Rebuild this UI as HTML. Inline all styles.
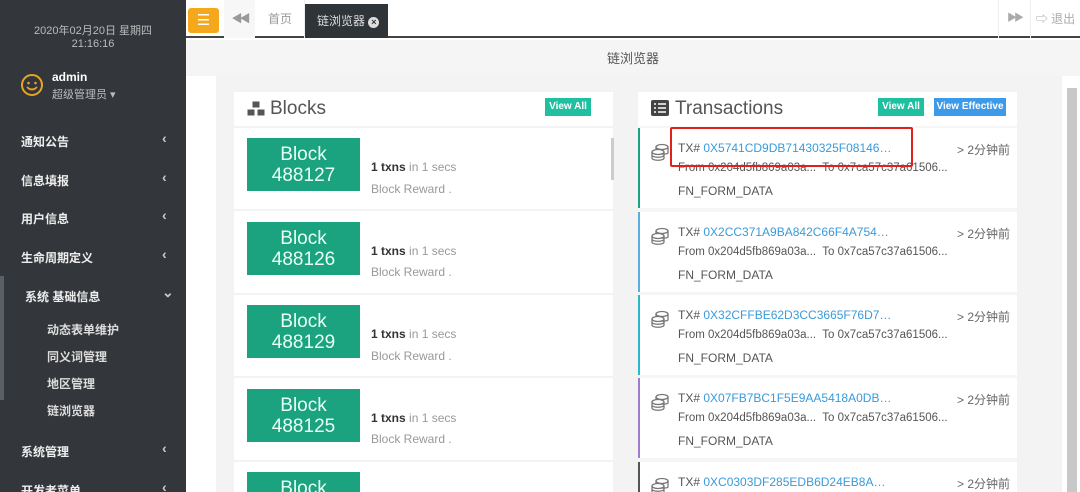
<!DOCTYPE html><html><head><meta charset="utf-8"><style>
*{margin:0;padding:0;box-sizing:border-box}
html,body{width:1080px;height:492px;overflow:hidden}
body{font-family:"Liberation Sans","Noto Sans CJK SC",sans-serif;background:#fff}
#w{position:relative;width:1080px;height:492px;overflow:hidden}
.a{position:absolute}
.side{left:0;top:0;width:186px;height:492px;background:#33363b;color:#fff}
.menu{left:21px;font-size:12px;font-weight:bold;color:#eee}
.arr{left:162px;font-size:14px;color:#ccc;font-weight:bold}
.sub{left:47px;font-size:12px;color:#ddd;font-weight:bold}
.blk{left:247px;width:113px;height:53px;background:#1aa37e;color:#e8fff6;text-align:center;font-size:19px;line-height:21px;padding-top:6px;overflow:hidden}
.bt{left:371px;font-size:12px;color:#999}
.bt b{color:#333}
.tx{left:638px;width:379px;height:80px;background:#fff;border-left:2px solid;overflow:hidden}
.tx .l1{position:absolute;left:38px;top:13px;font-size:12px;color:#555}
.tx .l1 span{color:#3a9ad9}
.tx .l2{position:absolute;left:38px;top:34px;font-size:11.5px;color:#555}
.tx .l3{position:absolute;left:38px;top:56px;font-size:12px;color:#555}
.tx .t{position:absolute;left:317px;top:13px;font-size:12px;color:#666}
.tx svg{position:absolute;left:10px;top:15px}
</style></head><body><div id="w">
<div class="a side">
<div class="a" style="left:0;width:186px;top:22px;text-align:center;font-size:11px;color:#bbb">2020年02月20日 星期四</div>
<div class="a" style="left:0;width:186px;top:38px;text-align:center;font-size:11px;color:#bbb">21:16:16</div>
<svg class="a" style="left:20px;top:73px" width="24" height="24" viewBox="0 0 24 24"><circle cx="12" cy="12" r="10" fill="none" stroke="#e8a424" stroke-width="2"/><circle cx="8.5" cy="10" r="1.3" fill="#e8a424"/><circle cx="15.5" cy="10" r="1.3" fill="#e8a424"/><path d="M7 14q5 5 10 0" fill="none" stroke="#e8a424" stroke-width="1.8"/></svg>
<div class="a" style="left:52px;top:70px;font-size:12px;font-weight:bold">admin</div>
<div class="a" style="left:52px;top:86px;font-size:11px;color:#bbb">超级管理员 ▾</div>
<div class="a menu" style="top:133px">通知公告</div><div class="a arr" style="top:130px">‹</div>
<div class="a menu" style="top:172px">信息填报</div><div class="a arr" style="top:169px">‹</div>
<div class="a menu" style="top:210px">用户信息</div><div class="a arr" style="top:207px">‹</div>
<div class="a menu" style="top:249px">生命周期定义</div><div class="a arr" style="top:246px">‹</div>
<div class="a" style="left:0;top:276px;width:4px;height:124px;background:#5a5f66"></div>
<div class="a menu" style="top:288px;left:25px">系统 基础信息</div><div class="a arr" style="top:284px">⌄</div>
<div class="a sub" style="top:321px">动态表单维护</div>
<div class="a sub" style="top:348px">同义词管理</div>
<div class="a sub" style="top:375px">地区管理</div>
<div class="a sub" style="top:402px">链浏览器</div>
<div class="a menu" style="top:443px">系统管理</div><div class="a arr" style="top:440px">‹</div>
<div class="a menu" style="top:482px">开发者菜单</div><div class="a arr" style="top:479px">‹</div>
</div>
<div class="a" style="left:186px;top:0;width:894px;height:38px;background:#fff;border-bottom:2px solid #444"></div>
<div class="a" style="left:188px;top:8px;width:31px;height:25px;background:#f6a81c;border-radius:3px;color:#fff;text-align:center;font-size:15px;line-height:25px">☰</div>
<div class="a" style="left:224px;top:0;width:31px;height:38px;background:#f7f7f7;color:#999;text-align:center;line-height:38px;font-size:11px;letter-spacing:-3px">◀◀</div>
<div class="a" style="left:256px;top:0;width:49px;height:38px;color:#999;text-align:center;line-height:38px;font-size:12px;border-right:1px solid #eee">首页</div>
<div class="a" style="left:305px;top:4px;width:83px;height:34px;background:#2f3439;color:#ddd;line-height:34px;font-size:12px;padding-left:12px">链浏览器 <span style="display:inline-block;width:11px;height:11px;border-radius:50%;background:#ddd;color:#2f3439;font-size:9px;line-height:11px;text-align:center;font-weight:bold">×</span></div>
<div class="a" style="left:998px;top:0;width:31px;height:38px;border-left:1px solid #eee;color:#aaa;text-align:center;line-height:38px;font-size:10px;letter-spacing:-3px">▶▶</div>
<div class="a" style="left:1030px;top:0;width:50px;height:38px;border-left:1px solid #eee;color:#aaa;text-align:center;line-height:38px;font-size:12px">⇨ 退出</div>
<div class="a" style="left:186px;top:40px;width:894px;height:36px;background:#f4f5f4;text-align:center;line-height:38px;font-size:13px;color:#555">链浏览器</div>
<div class="a" style="left:216px;top:75px;width:846px;height:417px;background:#f3f3f4"></div>
<div class="a" style="left:1062px;top:76px;width:18px;height:416px;background:#fff"></div>
<div class="a" style="left:1067px;top:88px;width:10px;height:404px;background:#c8c8c8"></div>
<!-- blocks -->
<div class="a" style="left:234px;top:92px;width:379px;height:34px;background:#fff"></div>
<svg class="a" style="left:246px;top:100px" width="20" height="18" viewBox="0 0 20 18"><path d="M6 1h8v7H6z M1 9h8v7H1z M11 9h8v7h-8z" fill="#555" stroke="#fff" stroke-width="1"/></svg>
<div class="a" style="left:270px;top:98px;font-size:19px;color:#555">Blocks</div>
<div class="a" style="left:545px;top:98px;width:46px;height:18px;background:#1ec0a0;color:#fff;font-size:10px;text-align:center;line-height:18px;font-weight:bold">View All</div>
<div class="a" style="left:234px;top:128px;width:379px;height:364px;background:#fff"></div>
<div class="a" style="left:234px;top:209px;width:379px;height:2px;background:#f3f3f4"></div>
<div class="a" style="left:234px;top:293px;width:379px;height:2px;background:#f3f3f4"></div>
<div class="a" style="left:234px;top:376px;width:379px;height:2px;background:#f3f3f4"></div>
<div class="a" style="left:234px;top:460px;width:379px;height:2px;background:#f3f3f4"></div>
<div class="a" style="left:611px;top:138px;width:3px;height:42px;background:#ccc"></div>
<div class="a blk" style="top:138px">Block<br>488127</div>
<div class="a bt" style="top:160px"><b>1 txns</b> in 1 secs</div><div class="a bt" style="top:182px">Block Reward .</div>
<div class="a blk" style="top:222px">Block<br>488126</div>
<div class="a bt" style="top:244px"><b>1 txns</b> in 1 secs</div><div class="a bt" style="top:265px">Block Reward .</div>
<div class="a blk" style="top:305px">Block<br>488129</div>
<div class="a bt" style="top:327px"><b>1 txns</b> in 1 secs</div><div class="a bt" style="top:349px">Block Reward .</div>
<div class="a blk" style="top:389px">Block<br>488125</div>
<div class="a bt" style="top:411px"><b>1 txns</b> in 1 secs</div><div class="a bt" style="top:432px">Block Reward .</div>
<div class="a blk" style="top:472px;height:20px">Block</div>
<!-- transactions -->
<div class="a" style="left:638px;top:92px;width:379px;height:34px;background:#fff"></div>
<svg class="a" style="left:651px;top:100px" width="18" height="16" viewBox="0 0 18 16"><rect width="18" height="16" rx="2" fill="#444"/><path d="M3 4h2M7 4h8M3 8h2M7 8h8M3 12h2M7 12h8" stroke="#fff" stroke-width="1.6"/></svg>
<div class="a" style="left:675px;top:98px;font-size:19px;color:#555">Transactions</div>
<div class="a" style="left:878px;top:98px;width:46px;height:18px;background:#1ec0a0;color:#fff;font-size:10px;text-align:center;line-height:18px;font-weight:bold">View All</div>
<div class="a" style="left:934px;top:98px;width:72px;height:18px;background:#3d9ae8;color:#fff;font-size:10px;text-align:center;line-height:18px;font-weight:bold">View Effective</div>
<div class="a" style="left:638px;top:126px;width:379px;height:366px;background:#f6f6f6"></div>
<div class="a tx" style="top:128px;border-color:#1aa37e"><svg width="20" height="18" viewBox="0 0 20 18"><g fill="none" stroke="#777" stroke-width="1.3"><ellipse cx="12" cy="4" rx="6" ry="2.5"/><path d="M6 4v6c0 1.5 12 1.5 12 0V4"/><ellipse cx="8" cy="9" rx="6" ry="2.5" fill="#fff"/><path d="M2 9v6c0 3 12 3 12 0V9M2 12c0 3 12 3 12 0"/></g></svg><div class="l1">TX# <span>0X5741CD9DB71430325F08146…</span></div><div class="l2">From 0x204d5fb869a03a...&nbsp; To 0x7ca57c37a61506...</div><div class="l3">FN_FORM_DATA</div><div class="t">&gt; 2分钟前</div></div>
<div class="a tx" style="top:212px;border-color:#5aaee0"><svg width="20" height="18" viewBox="0 0 20 18"><g fill="none" stroke="#777" stroke-width="1.3"><ellipse cx="12" cy="4" rx="6" ry="2.5"/><path d="M6 4v6c0 1.5 12 1.5 12 0V4"/><ellipse cx="8" cy="9" rx="6" ry="2.5" fill="#fff"/><path d="M2 9v6c0 3 12 3 12 0V9M2 12c0 3 12 3 12 0"/></g></svg><div class="l1">TX# <span>0X2CC371A9BA842C66F4A754…</span></div><div class="l2">From 0x204d5fb869a03a...&nbsp; To 0x7ca57c37a61506...</div><div class="l3">FN_FORM_DATA</div><div class="t">&gt; 2分钟前</div></div>
<div class="a tx" style="top:295px;border-color:#2bb8c8"><svg width="20" height="18" viewBox="0 0 20 18"><g fill="none" stroke="#777" stroke-width="1.3"><ellipse cx="12" cy="4" rx="6" ry="2.5"/><path d="M6 4v6c0 1.5 12 1.5 12 0V4"/><ellipse cx="8" cy="9" rx="6" ry="2.5" fill="#fff"/><path d="M2 9v6c0 3 12 3 12 0V9M2 12c0 3 12 3 12 0"/></g></svg><div class="l1">TX# <span>0X32CFFBE62D3CC3665F76D7…</span></div><div class="l2">From 0x204d5fb869a03a...&nbsp; To 0x7ca57c37a61506...</div><div class="l3">FN_FORM_DATA</div><div class="t">&gt; 2分钟前</div></div>
<div class="a tx" style="top:378px;border-color:#a07cd0"><svg width="20" height="18" viewBox="0 0 20 18"><g fill="none" stroke="#777" stroke-width="1.3"><ellipse cx="12" cy="4" rx="6" ry="2.5"/><path d="M6 4v6c0 1.5 12 1.5 12 0V4"/><ellipse cx="8" cy="9" rx="6" ry="2.5" fill="#fff"/><path d="M2 9v6c0 3 12 3 12 0V9M2 12c0 3 12 3 12 0"/></g></svg><div class="l1">TX# <span>0X07FB7BC1F5E9AA5418A0DB…</span></div><div class="l2">From 0x204d5fb869a03a...&nbsp; To 0x7ca57c37a61506...</div><div class="l3">FN_FORM_DATA</div><div class="t">&gt; 2分钟前</div></div>
<div class="a tx" style="top:462px;height:30px;border-color:#555"><svg width="20" height="18" viewBox="0 0 20 18"><g fill="none" stroke="#777" stroke-width="1.3"><ellipse cx="12" cy="4" rx="6" ry="2.5"/><path d="M6 4v6c0 1.5 12 1.5 12 0V4"/><ellipse cx="8" cy="9" rx="6" ry="2.5" fill="#fff"/><path d="M2 9v6c0 3 12 3 12 0V9M2 12c0 3 12 3 12 0"/></g></svg><div class="l1">TX# <span>0XC0303DF285EDB6D24EB8A…</span></div><div class="t">&gt; 2分钟前</div></div>
<div class="a" style="left:670px;top:127px;width:243px;height:40px;border:2px solid #e02020;border-radius:2px"></div>
</div></body></html>
